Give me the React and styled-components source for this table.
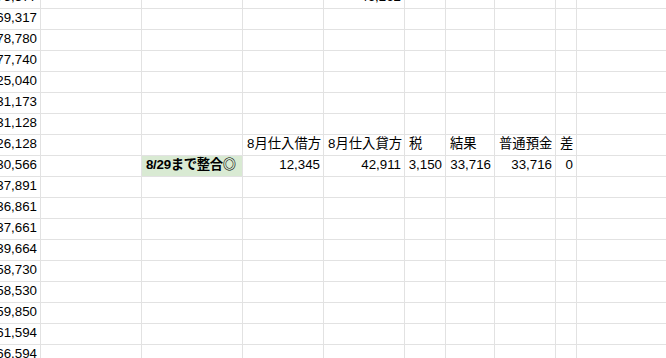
import React from "react";
import styled, { createGlobalStyle } from "styled-components";

const Global = createGlobalStyle`
  html, body { margin: 0; padding: 0; background: #fff; }
  body { font-family: "Liberation Sans", "Noto Sans CJK JP", sans-serif; }
`;

const Viewport = styled.div`
  width: 666px;
  height: 358px;
  overflow: hidden;
  background: #fff;
`;

const Sheet = styled.div`
  display: grid;
  grid-template-columns: 41px 101px 101px 81px 81px 41px 49px 61px 21px 140px;
  grid-auto-rows: 21px;
  margin-top: -12px;
  width: max-content;
`;

const Cell = styled.div`
  box-sizing: border-box;
  border-right: 1px solid #e2e2e2;
  border-bottom: 1px solid #e2e2e2;
  background: ${(p) => p.$bg || "transparent"};
  display: flex;
  align-items: flex-end;
  justify-content: ${(p) => (p.$align === "right" ? "flex-end" : "flex-start")};
  padding: 0 3px 3px 4px;
  overflow: hidden;
  white-space: nowrap;
  font-family: "Liberation Sans", "Noto Sans CJK JP", sans-serif;
  font-size: 13.33px;
  line-height: 17px;
  font-weight: ${(p) => (p.$bold ? 700 : 400)};
  letter-spacing: ${(p) => (p.$bold ? "-0.3px" : "0")};
  color: #000;
`;

const colA = [
  "75,377", "69,317", "78,780", "77,740", "25,040", "31,173", "31,128",
  "26,128", "30,566", "37,891", "36,861", "37,661", "39,664", "58,730",
  "58,530", "59,850", "61,594", "66,594",
];

const special = {
  0: { 4: { text: "46,262", align: "right" } },
  7: {
    3: { text: "8月仕入借方" },
    4: { text: "8月仕入貸方" },
    5: { text: "税" },
    6: { text: "結果" },
    7: { text: "普通預金" },
    8: { text: "差" },
  },
  8: {
    2: { text: "8/29まで整合◎", bold: true, bg: "#d9ead3" },
    3: { text: "12,345", align: "right" },
    4: { text: "42,911", align: "right" },
    5: { text: "3,150", align: "right" },
    6: { text: "33,716", align: "right" },
    7: { text: "33,716", align: "right" },
    8: { text: "0", align: "right" },
  },
};

export default function App() {
  const cells = [];
  colA.forEach((a, r) => {
    for (let c = 0; c < 10; c++) {
      let content = null;
      let props = {};
      if (c === 0) {
        content = a;
        props.$align = "right";
      } else if (special[r] && special[r][c]) {
        const s = special[r][c];
        content = s.text;
        props.$align = s.align;
        props.$bold = s.bold;
        props.$bg = s.bg;
      }
      cells.push(
        <Cell key={`${r}-${c}`} {...props}>
          {content}
        </Cell>
      );
    }
  });
  return (
    <>
      <Global />
      <Viewport>
        <Sheet>{cells}</Sheet>
      </Viewport>
    </>
  );
}
